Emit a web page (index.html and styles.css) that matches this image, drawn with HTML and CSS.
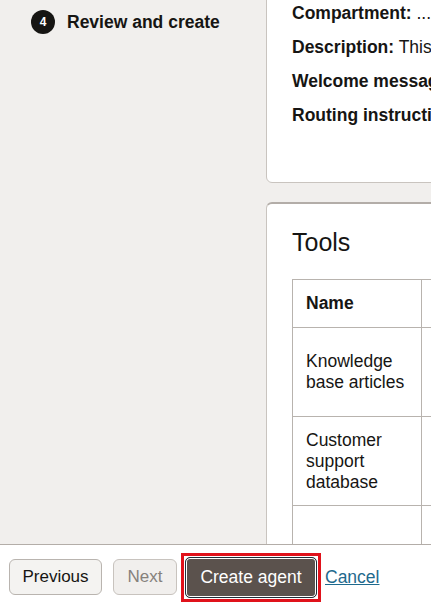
FILE: index.html
```html
<!DOCTYPE html>
<html lang="en">
<head>
<meta charset="utf-8">
<title>Create agent - Review</title>
<link rel="stylesheet" href="styles.css">
</head>
<body>
<div class="page">
  <main class="main">
    <aside class="steps">
      <div class="step">
        <span class="step-num">4</span>
        <span class="step-label">Review and create</span>
      </div>
    </aside>
    <section class="content">
      <div class="card card-summary">
        <div class="kv"><b>Compartment:</b> ...</div>
        <div class="kv"><b>Description:</b> This agent helps customers with support questions</div>
        <div class="kv"><b>Welcome message:</b> Hello, how can I help you today?</div>
        <div class="kv"><b>Routing instructions:</b> Route to the appropriate tool</div>
      </div>
      <div class="card card-tools">
        <h2 class="card-title">Tools</h2>
        <table class="tbl">
          <thead>
            <tr><th class="col-name">Name</th><th>Description</th></tr>
          </thead>
          <tbody>
            <tr><td class="col-name">Knowledge base articles</td><td>Searches knowledge base articles for answers</td></tr>
            <tr><td class="col-name">Customer support database</td><td>Queries the customer support database</td></tr>
            <tr class="tall"><td class="col-name"></td><td></td></tr>
          </tbody>
        </table>
      </div>
    </section>
  </main>
  <footer class="footer">
    <button class="btn btn-prev">Previous</button>
    <button class="btn btn-next" disabled>Next</button>
    <span class="focus-box"><button class="btn btn-primary">Create agent</button></span>
    <a class="link-cancel" href="#">Cancel</a>
  </footer>
</div>
</body>
</html>
```

FILE: styles.css
```css
* { box-sizing: border-box; }
html, body {
  margin: 0;
  padding: 0;
  width: 431px;
  height: 609px;
  overflow: hidden;
  background: #f1efed;
  color: #161513;
  font-family: "Liberation Sans", Arial, sans-serif;
  font-size: 17px;
}
.page {
  display: flex;
  flex-direction: column;
  height: 609px;
}
.main {
  height: 544px;
  display: grid;
  grid-template-columns: 266px 1fr;
  overflow: hidden;
}
.steps {
  padding: 10px 0 0 31px;
}
.step {
  display: flex;
  align-items: center;
  gap: 12px;
}
.step-num {
  width: 24px;
  height: 24px;
  border-radius: 50%;
  background: #161513;
  color: #fff;
  font-size: 12px;
  font-weight: 700;
  display: flex;
  align-items: center;
  justify-content: center;
}
.step-label {
  font-weight: 700;
  font-size: 17.5px;
  line-height: 24px;
}
.content {
  display: flex;
  flex-direction: column;
  gap: 19px;
  min-width: 0;
}
.card {
  width: 640px;
  background: #fff;
  border: 1px solid #c9c4bf;
  border-radius: 6px;
}
.card-summary {
  margin-top: -10px;
  padding: 12px 25px 57px;
  display: flex;
  flex-direction: column;
  gap: 14px;
}
.kv {
  line-height: 20px;
  white-space: nowrap;
  font-size: 17.5px;
}
.kv b { font-weight: 700; }
.card-tools {
  border-top: 2px solid #b3ada8;
  padding: 23px 25px 0;
  flex: 1;
  border-bottom: none;
  border-radius: 6px 6px 0 0;
}
.card-title {
  margin: 0 0 22px;
  font-size: 25px;
  font-weight: 400;
  line-height: 30px;
}
.tbl {
  border-collapse: collapse;
  border: 1px solid #b8b3ae;
  border-bottom: none;
  font-size: 17.5px;
}
.tbl th, .tbl td {
  border: 1px solid #b8b3ae;
  text-align: left;
  vertical-align: middle;
  padding: 0 12px 0 13px;
  line-height: 21px;
}
.tbl th {
  height: 48px;
  font-weight: 700;
}
.tbl td {
  height: 89px;
}
.tbl .col-name { width: 129px; }
.tbl th:last-child, .tbl td:last-child { width: 300px; }
.tbl tr.tall td { height: 60px; }
.footer {
  height: 65px;
  background: #fff;
  border-top: 1px solid #b3ada8;
  display: flex;
  align-items: center;
  padding: 0 9px;
}
.btn {
  font-family: inherit;
  font-size: 17px;
  height: 36px;
  border-radius: 6px;
  border: 1px solid #b9b4af;
  background: #f4f3f1;
  color: #161513;
  padding: 0 8px;
  cursor: pointer;
}
.btn-prev { width: 93px; }
.btn-next {
  width: 64px;
  margin-left: 11px;
  color: #86817c;
  border-color: #c8c3be;
  background: #f1efed;
}
.focus-box {
  margin-left: 4px;
  display: inline-flex;
  border: 3px solid #e0121b;
  padding: 1px;
  background: #fff;
}
.btn-primary {
  width: 132px;
  height: 41px;
  font-size: 17.5px;
  background: #5b524d;
  color: #fff;
  border: 1px solid #1f2d38;
  border-radius: 5px;
  box-shadow: inset 0 0 0 1px #fff;
  outline: none;
}
.link-cancel {
  margin-left: 4px;
  color: #1f6a8d;
  text-decoration: underline;
  font-size: 17.5px;
}
```
